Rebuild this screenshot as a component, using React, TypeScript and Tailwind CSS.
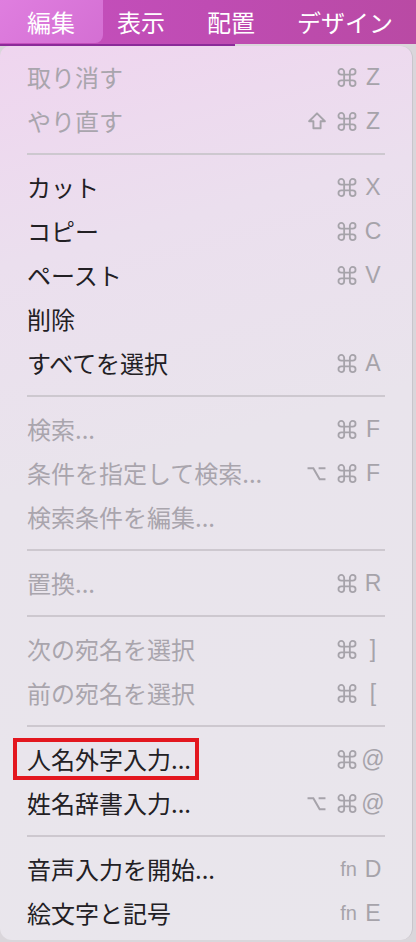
import React from 'react';

type Mod = 'cmd' | 'shift' | 'opt';

type Item = {
  label: string;
  mods?: Mod[];
  keyChar?: string;
  fn?: boolean;
  disabled?: boolean;
  marked?: boolean;
};

type Entry = Item | 'sep';

const entries: Entry[] = [
  { label: '取り消す', mods: ['cmd'], keyChar: 'Z', disabled: true },
  { label: 'やり直す', mods: ['shift', 'cmd'], keyChar: 'Z', disabled: true },
  'sep',
  { label: 'カット', mods: ['cmd'], keyChar: 'X' },
  { label: 'コピー', mods: ['cmd'], keyChar: 'C' },
  { label: 'ペースト', mods: ['cmd'], keyChar: 'V' },
  { label: '削除' },
  { label: 'すべてを選択', mods: ['cmd'], keyChar: 'A' },
  'sep',
  { label: '検索...', mods: ['cmd'], keyChar: 'F', disabled: true },
  { label: '条件を指定して検索...', mods: ['opt', 'cmd'], keyChar: 'F', disabled: true },
  { label: '検索条件を編集...', disabled: true },
  'sep',
  { label: '置換...', mods: ['cmd'], keyChar: 'R', disabled: true },
  'sep',
  { label: '次の宛名を選択', mods: ['cmd'], keyChar: ']', disabled: true },
  { label: '前の宛名を選択', mods: ['cmd'], keyChar: '[', disabled: true },
  'sep',
  { label: '人名外字入力...', mods: ['cmd'], keyChar: '@', marked: true },
  { label: '姓名辞書入力...', mods: ['opt', 'cmd'], keyChar: '@' },
  'sep',
  { label: '音声入力を開始...', fn: true, keyChar: 'D' },
  { label: '絵文字と記号', fn: true, keyChar: 'E' },
];

function ModIcon({ mod }: { mod: Mod }) {
  if (mod === 'cmd') {
    return (
      <svg width="20" height="19" viewBox="0 0 20 20" fill="none" stroke="currentColor" strokeWidth="1.9">
        <path d="M7 7V4a3 3 0 1 0-3 3h3zM13 7V4a3 3 0 1 1 3 3h-3zM7 13v3a3 3 0 1 1-3-3h3zM13 13v3a3 3 0 1 0 3-3h-3zM7 7h6v6H7z" />
      </svg>
    );
  }
  if (mod === 'shift') {
    return (
      <svg width="18" height="18" viewBox="0 0 16 16" fill="none" stroke="currentColor" strokeWidth="1.7" strokeLinejoin="round">
        <path d="M8 1.2L15 8.2H11.2v6.3H4.8V8.2H1z" />
      </svg>
    );
  }
  return (
    <svg width="19" height="15" viewBox="0 0 18 14" fill="none" stroke="currentColor" strokeWidth="1.9">
      <path d="M0.5 2H6L12 12.5H17.5M11 2H17.5" />
    </svg>
  );
}

function Shortcut({ item }: { item: Item }) {
  if (!item.keyChar) return null;
  return (
    <div className="flex items-center text-[#a6a3aa]">
      <div className="flex items-center gap-[11px]">
        {item.fn ? (
          <span className="font-['Liberation_Sans',sans-serif] text-[20px] leading-none">fn</span>
        ) : (
          item.mods?.map((m, i) => <ModIcon key={i} mod={m} />)
        )}
      </div>
      <span className="ml-[3px] w-[26px] text-center font-['Liberation_Sans',sans-serif] text-[23px] leading-none">
        {item.keyChar}
      </span>
    </div>
  );
}

export default function App() {
  return (
    <div className="relative h-[942px] w-[416px] overflow-hidden bg-[#dad6db] font-['Noto_Sans_CJK_JP',sans-serif]">
      {/* menu bar */}
      <div className="flex h-[44px] items-start bg-[linear-gradient(90deg,#c650bf_0%,#bf4cb3_50%,#b94aa4_100%)] text-[24px] leading-none text-white">
        <div className="flex h-[43px] w-[103px] items-center rounded-br-[8px] bg-[linear-gradient(135deg,#df7edf_0%,#d46fd3_100%)] pl-[27px]">
          編集
        </div>
        <div className="ml-[14px] flex h-[43px] items-center gap-[42px]">
          <span>表示</span>
          <span>配置</span>
          <span>デザイン</span>
        </div>
      </div>
      <div className="h-[2px] w-[235px] bg-[#8b2b99]" />

      {/* dropdown */}
      <div className="absolute left-0 top-[46px] h-[894px] w-[413px] rounded-t-[10px] rounded-tr-[12px] rounded-b-[12px] border-r border-[#c9c5cb] bg-[linear-gradient(165deg,#efd5ef_0%,#ebdfee_22%,#e9e4ec_45%,#e9e6ec_100%)] pt-[9px] text-[24px] leading-none">
        {entries.map((e, i) =>
          e === 'sep' ? (
            <div key={i} className="flex h-[22px] items-center px-[27px]">
              <div className="h-[2px] w-full bg-[#cdc8cf]" />
            </div>
          ) : (
            <div
              key={i}
              className={`relative flex h-[44px] items-center justify-between pl-[27px] pr-[26px] ${
                e.disabled ? 'text-[#a9a5ad]' : 'text-[#222024]'
              }`}
            >
              <span>{e.label}</span>
              <Shortcut item={e} />
              {e.marked && (
                <div className="absolute left-[13px] top-[1px] h-[42px] w-[186px] border-[4px] border-[#e3171f]" />
              )}
            </div>
          )
        )}
      </div>
    </div>
  );
}
